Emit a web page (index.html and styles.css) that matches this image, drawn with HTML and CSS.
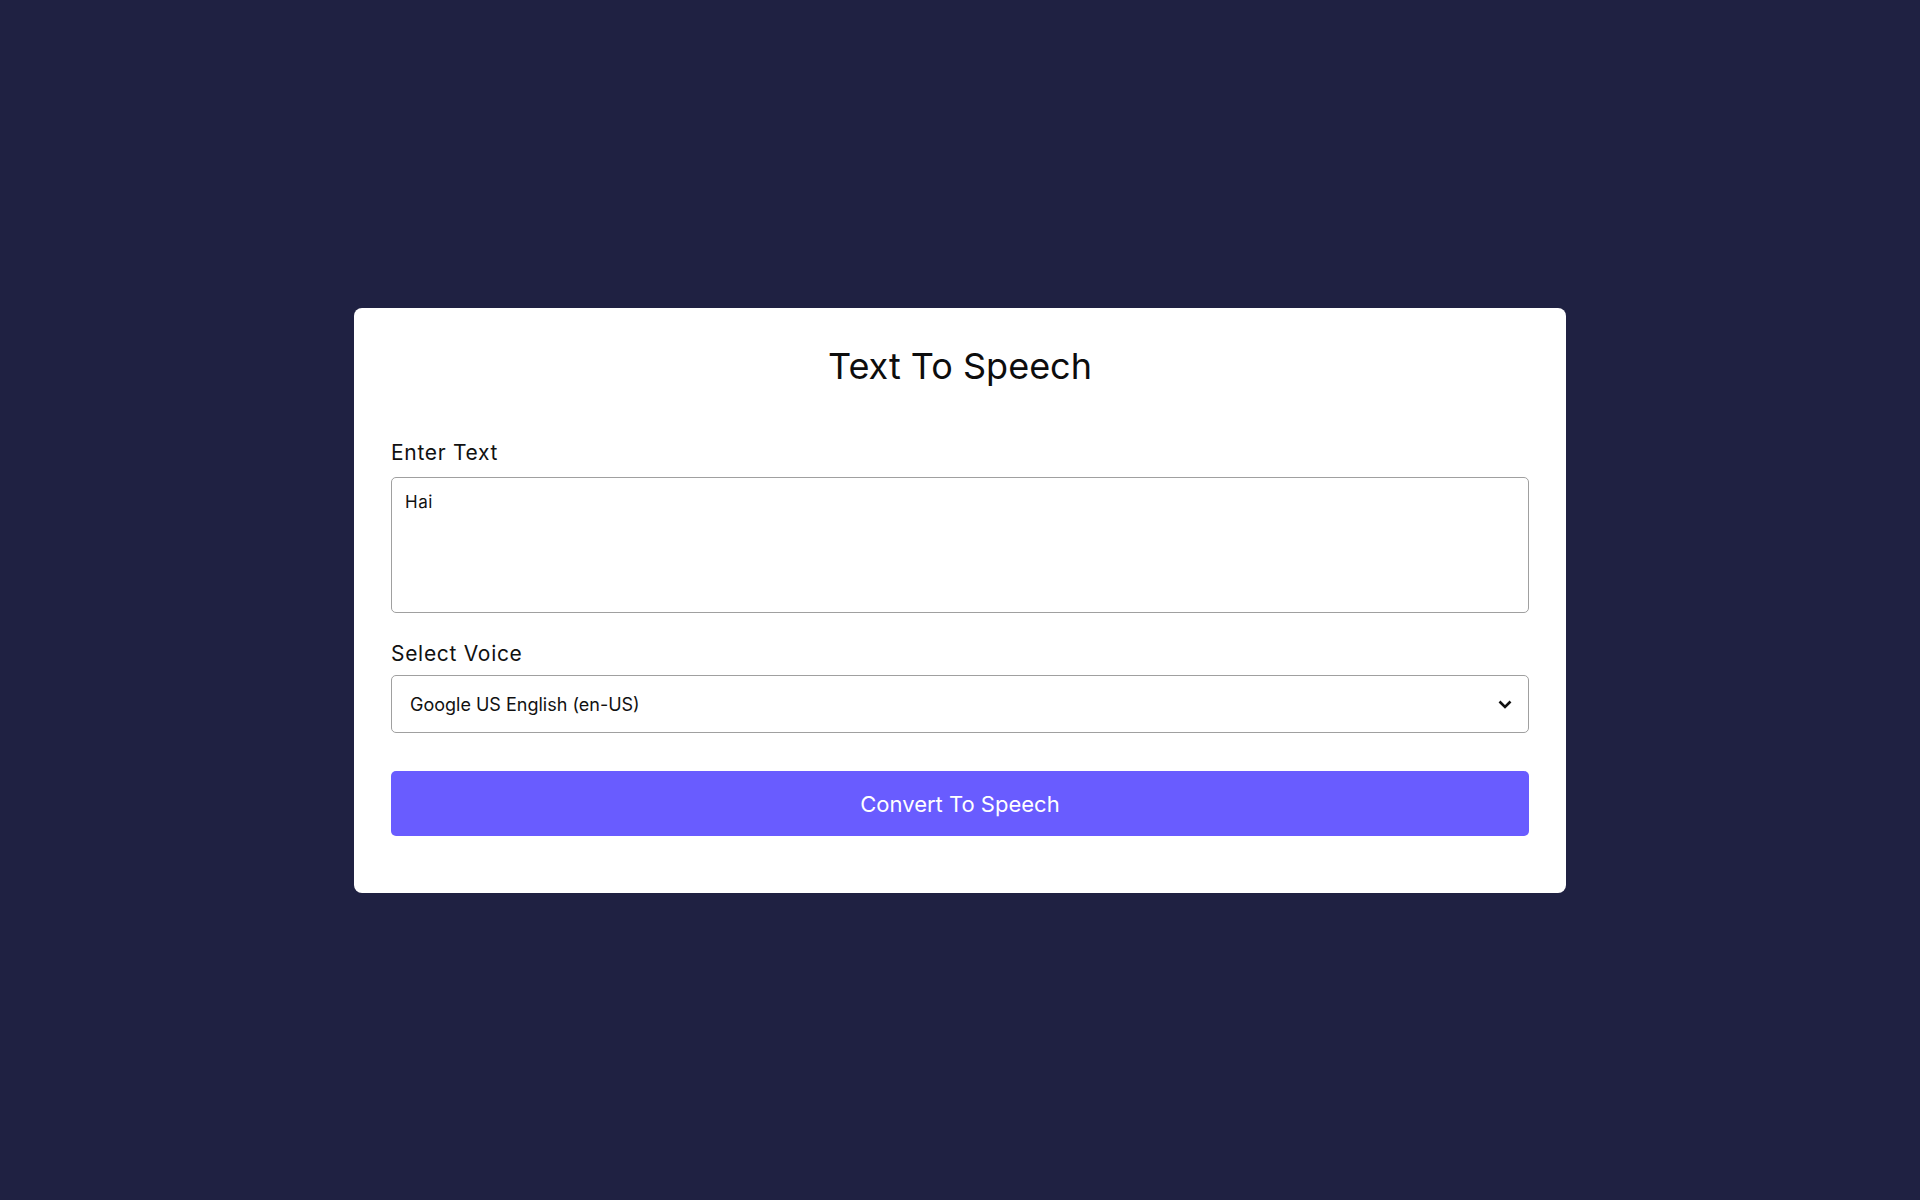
FILE: index.html
```html
<!DOCTYPE html>
<html lang="en">
<head>
<meta charset="utf-8">
<title>Text To Speech</title>
<link rel="stylesheet" href="styles.css">
</head>
<body>
<main class="card">
  <h1 class="title">Text To Speech</h1>
  <label class="label label-text" for="text">Enter Text</label>
  <textarea id="text" class="textarea">Hai</textarea>
  <label class="label label-voice" for="voice">Select Voice</label>
  <div class="select-wrap">
    <select id="voice" class="select">
      <option>Google US English (en-US)</option>
    </select>
    <svg class="chevron" width="14" height="9" viewBox="0 0 14 9" aria-hidden="true">
      <path d="M1.5 1.5 L7 7 L12.5 1.5" fill="none" stroke="#111" stroke-width="2.6" stroke-linecap="butt" stroke-linejoin="miter"/>
    </svg>
  </div>
  <button class="button" type="button">Convert To Speech</button>
</main>
</body>
</html>
```

FILE: styles.css
```css
* {
  box-sizing: border-box;
}

html, body {
  margin: 0;
  padding: 0;
}

body {
  min-height: 100vh;
  background: #1f2142;
  display: flex;
  align-items: center;
  justify-content: center;
  font-family: Inter, "Noto Sans", sans-serif;
  color: #111;
}

.card {
  width: 1212px;
  background: #ffffff;
  border-radius: 8px;
  padding: 36px 37px 57px;
  display: flex;
  flex-direction: column;
}

.title {
  margin: 0 0 53px;
  font-size: 36px;
  line-height: 44px;
  font-weight: 400;
  text-align: center;
  color: #0d0d0d;
}

.label {
  display: block;
  font-size: 21px;
  line-height: 24px;
  font-weight: 400;
  letter-spacing: 0.7px;
  color: #111;
}

.label-text {
  margin-bottom: 12px;
}

.label-voice {
  margin-bottom: 9px;
}

.textarea {
  display: block;
  width: 100%;
  height: 136px;
  margin: 0 0 29px;
  padding: 14px 13px;
  border: 1px solid #a0a0a0;
  border-radius: 5px;
  resize: none;
  font-family: Inter, "Noto Sans", sans-serif;
  font-size: 17px;
  line-height: 21px;
  letter-spacing: 0.5px;
  color: #111;
  outline: none;
}

.select-wrap {
  position: relative;
  margin-bottom: 38px;
}

.select {
  display: block;
  width: 100%;
  height: 58px;
  padding: 2px 48px 0 18px;
  border: 1px solid #a0a0a0;
  border-radius: 5px;
  background: #fff;
  appearance: none;
  -webkit-appearance: none;
  font-family: Inter, "Noto Sans", sans-serif;
  font-size: 18px;
  color: #111;
  outline: none;
}

.chevron {
  position: absolute;
  right: 17px;
  top: 25px;
  pointer-events: none;
}

.button {
  display: block;
  width: 100%;
  height: 65px;
  padding: 2px 0 0;
  border: none;
  border-radius: 5px;
  background: #695cff;
  color: #ffffff;
  font-family: Inter, "Noto Sans", sans-serif;
  font-size: 22px;
  font-weight: 400;
  cursor: pointer;
}
```
